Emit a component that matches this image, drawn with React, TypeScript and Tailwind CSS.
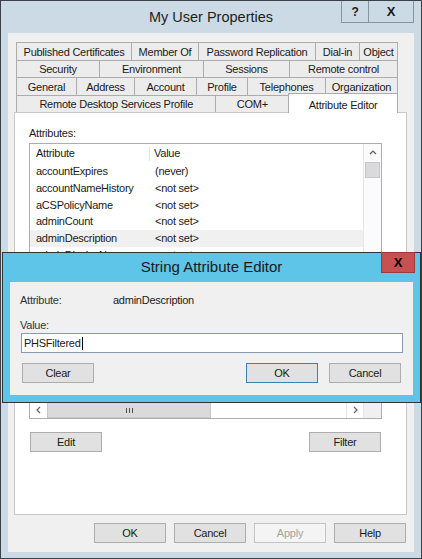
import React from 'react';

type Tab = [string, string];

const tabRows: Tab[][] = [
  [
    ['Published Certificates', 'w-[115px]'],
    ['Member Of', 'w-[67px]'],
    ['Password Replication', 'w-[117px]'],
    ['Dial-in', 'w-[44px]'],
    ['Object', 'w-[39px]'],
  ],
  [
    ['Security', 'w-[83px]'],
    ['Environment', 'w-[104px]'],
    ['Sessions', 'w-[86px]'],
    ['Remote control', 'w-[109px]'],
  ],
  [
    ['General', 'w-[60px]'],
    ['Address', 'w-[58px]'],
    ['Account', 'w-[62px]'],
    ['Profile', 'w-[51px]'],
    ['Telephones', 'w-[78px]'],
    ['Organization', 'w-[73px]'],
  ],
];

// only the rows that peek out above the editor dialog
const attrs = [
  ['accountExpires', '(never)'],
  ['accountNameHistory', '<not set>'],
  ['aCSPolicyName', '<not set>'],
  ['adminCount', '<not set>'],
  ['adminDescription', '<not set>'],
  ['adminDisplayName', '<not set>'],
];

type BtnKind = 'normal' | 'default' | 'disabled';

function Btn({ label, kind = 'normal' }: { label: string; kind?: BtnKind }) {
  const look =
    kind === 'default'
      ? 'border-[#3c7fb1] bg-[#e1e1e1] text-[#1a1a1a]'
      : kind === 'disabled'
        ? 'border-[#c4c4c4] bg-[#f4f4f4] text-[#a3a3a3]'
        : 'border-[#adadad] bg-[#e1e1e1] text-[#1a1a1a]';
  return (
    <div className={`flex h-[20px] w-[72px] items-center justify-center border ${look}`}>
      {label}
    </div>
  );
}

function Chevron({ dir }: { dir: 'up' | 'left' | 'right' }) {
  const pts =
    dir === 'up' ? '1,5 4,2 7,5' : dir === 'left' ? '5,1 2,4 5,7' : '3,1 6,4 3,7';
  return (
    <svg width="8" height="8" viewBox="0 0 8 8">
      <polyline points={pts} fill="none" stroke="#606060" strokeWidth="1.2" />
    </svg>
  );
}

export default function App() {
  return (
    <div className="relative h-[559px] w-[422px] overflow-hidden border border-[#3a4148] bg-[#cbdae4] font-['Liberation_Sans',Arial,sans-serif] text-[11px] tracking-[-0.25px] text-[#1a1a1a]">
      {/* caption */}
      <div className="relative flex h-[32px] items-center justify-center">
        <span className="pt-[2px] text-[14.5px] tracking-normal text-[#1e1e1e]">My User Properties</span>
        <div className="absolute right-[7px] top-0 flex h-[22px] border border-t-0 border-[#8695a0]">
          <div className="flex w-[27px] items-center justify-center border-r border-[#8695a0] text-[12px] font-bold">
            ?
          </div>
          <div className="flex w-[44px] items-center justify-center text-[13px] font-bold">X</div>
        </div>
      </div>

      {/* client area */}
      <div className="mx-[7px] h-[519px] bg-[#f0f0f0] px-[6px] pt-[9px]">
        {/* tab headers */}
        <div className="ml-[2px] w-[382px]">
          {tabRows.map((row, i) => (
            <div key={i} className="flex h-[17.5px]">
              {row.map(([label, w], j) => (
                <div
                  key={label}
                  className={`${w} flex items-center justify-center border-l border-t border-[#acacac] bg-[#ececec] pt-[1px] ${
                    j === row.length - 1 ? 'border-r' : ''
                  }`}
                >
                  {label}
                </div>
              ))}
            </div>
          ))}
          <div className="flex h-[17.5px]">
            <div className="flex w-[200px] items-center justify-center border-l border-t border-[#acacac] bg-[#ececec] pt-[1px]">
              Remote Desktop Services Profile
            </div>
            <div className="flex w-[74px] items-center justify-center border-l border-r border-t border-[#acacac] bg-[#ececec] pt-[1px]">
              COM+
            </div>
            <div className="relative z-10 -ml-[1px] -mt-[1.5px] flex h-[20px] w-[110px] items-start justify-center border-l border-r border-t border-[#acacac] bg-white pt-[3px]">
              Attribute Editor
            </div>
          </div>
        </div>

        {/* tab page */}
        <div className="h-[403px] w-[393px] border border-[#c9c9c9] bg-white pl-[14px] pt-[14px]">
          <div className="leading-[13px]">Attributes:</div>

          {/* list view */}
          <div className="mt-[3px] flex h-[276px] w-[353px] flex-col border border-[#abadb3] bg-white">
            <div className="flex h-[258px]">
              <div className="flex-1 overflow-hidden">
                <div className="flex h-[19px] items-center">
                  <div className="flex h-[14px] w-[120px] items-center border-r border-[#e5e5e5] pl-[6px]">
                    Attribute
                  </div>
                  <div className="pl-[4px]">Value</div>
                </div>
                {attrs.map(([name, value]) => (
                  <div
                    key={name}
                    className={`flex h-[16.75px] items-center ${
                      name === 'adminDescription' ? 'bg-[#f0f0f0]' : ''
                    }`}
                  >
                    <div className="w-[120px] pl-[6px]">{name}</div>
                    <div className="pl-[5px]">{value}</div>
                  </div>
                ))}
              </div>
              <div className="flex w-[18px] flex-col border-l border-[#e6e6e6] bg-[#fbfbfb]">
                <div className="flex h-[18px] items-center justify-center">
                  <Chevron dir="up" />
                </div>
                <div className="mx-[1px] h-[16px] border border-[#c7c7c7] bg-[#dadada]" />
              </div>
            </div>
            <div className="flex h-[16px]">
              <div className="flex w-[17px] items-center justify-center">
                <Chevron dir="left" />
              </div>
              <div className="flex w-[164px] items-center justify-center gap-[2px] border border-[#c7c7c7] bg-[#dadada]">
                <span className="h-[5px] w-[1px] bg-[#505050]" />
                <span className="h-[5px] w-[1px] bg-[#505050]" />
                <span className="h-[5px] w-[1px] bg-[#505050]" />
              </div>
              <div className="flex-1 bg-white" />
              <div className="flex w-[17px] items-center justify-center border-l border-[#e6e6e6]">
                <Chevron dir="right" />
              </div>
              <div className="w-[18px] border-l border-[#e6e6e6] bg-[#f0f0f0]" />
            </div>
          </div>

          <div className="mt-[13px] flex w-[353px] justify-between px-[1px]">
            <Btn label="Edit" />
            <Btn label="Filter" />
          </div>
        </div>

        {/* dialog buttons */}
        <div className="mr-[2px] mt-[8px] flex justify-end gap-[8px]">
          <Btn label="OK" />
          <Btn label="Cancel" />
          <Btn label="Apply" kind="disabled" />
          <Btn label="Help" />
        </div>
      </div>

      {/* String Attribute Editor dialog */}
      <div className="absolute left-[1px] top-[251px] h-[151px] w-[419px] border border-[#2e3438] bg-[#5fc5e8] px-[7px] pb-[7px]">
        <div className="flex h-[29px] items-center justify-center text-[15px] tracking-normal text-[#1a1a1a]">
          String Attribute Editor
        </div>
        <div className="absolute -top-[1px] right-[5px] flex h-[21px] w-[34px] items-center justify-center border border-[#9a3b3b] bg-[#c75050] text-[13px] font-bold text-black">
          X
        </div>
        <div className="h-[113px] bg-[#f0f0f0] pl-[10px] pr-[12px] pt-[11px]">
          <div className="flex leading-[14px] text-[#333]">
            <div className="w-[93px]">Attribute:</div>
            <div className="text-[#1a1a1a]">adminDescription</div>
          </div>
          <div className="mt-[11px] leading-[14px] text-[#333]">Value:</div>
          <div className="ml-[1px] mt-[1px] flex h-[20px] w-[382px] items-center border border-[#8a9bb0] bg-white pl-[2px]">
            <span>PHSFiltered</span>
            <span className="ml-[1px] h-[13px] w-[1px] bg-black" />
          </div>
          <div className="ml-[2px] mt-[10px] flex">
            <Btn label="Clear" />
            <div className="flex-1" />
            <Btn label="OK" kind="default" />
            <div className="w-[11px]" />
            <Btn label="Cancel" />
          </div>
        </div>
      </div>
    </div>
  );
}
